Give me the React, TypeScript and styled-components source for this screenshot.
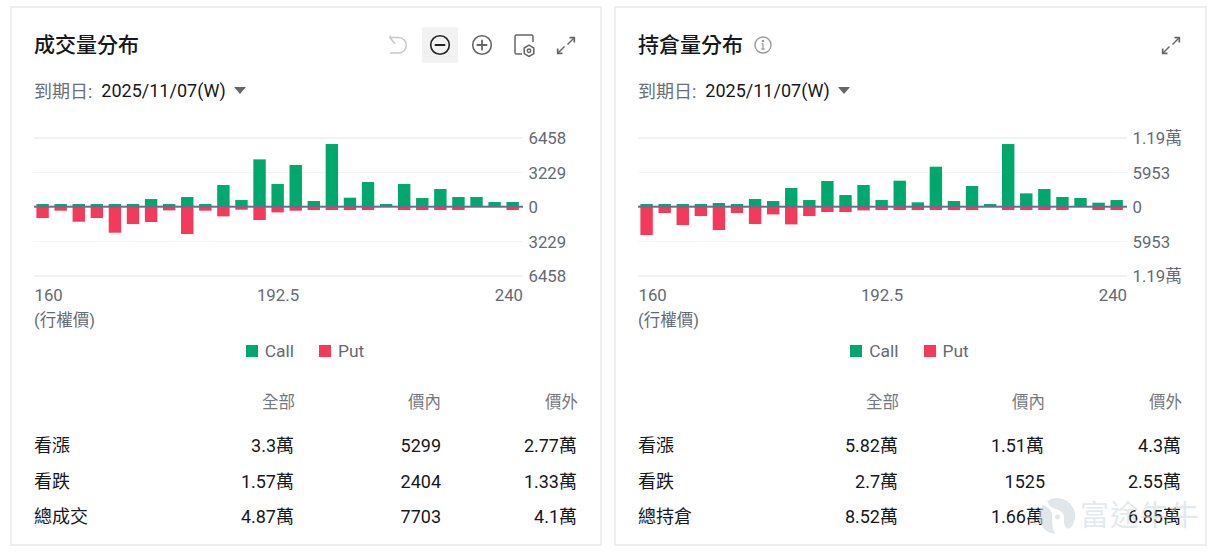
import React from "react";
import styled, { createGlobalStyle } from "styled-components";

const Global = createGlobalStyle`
  html, body { margin: 0; padding: 0; background: #fff; }
  body { font-family: Roboto, "Noto Sans CJK TC", sans-serif; }
`;

const Page = styled.div`
  position: relative;
  display: flex;
  gap: 12px;
  width: 1217px;
  height: 552px;
  padding: 6px 10px;
  box-sizing: border-box;
  overflow: hidden;
`;
const Panel = styled.section<{ $w: number }>`
  width: ${(p) => p.$w}px;
  height: 540px;
  box-sizing: border-box;
  border: 2px solid #eeeeee;
  padding: 0 22px;
  display: flex;
  flex-direction: column;
`;
const Header = styled.header`
  display: flex;
  align-items: center;
  height: 36px;
  margin-top: 19px;
  flex: none;
`;
const Title = styled.h2`
  margin: 0;
  font-size: 21px;
  line-height: 28px;
  font-weight: 500;
  color: #16181c;
`;
const InfoButton = styled.span`
  display: inline-flex;
  margin-left: 11px;
  color: #9a9a9a;
`;
const Tools = styled.div`
  margin-left: auto;
  margin-right: -6px;
  display: flex;
  align-items: center;
  gap: 6px;
`;
const Tool = styled.span<{ $active?: boolean; $color: string }>`
  display: flex;
  align-items: center;
  justify-content: center;
  width: 36px;
  height: 36px;
  border-radius: 2px;
  color: ${(p) => p.$color};
  background: ${(p) => (p.$active ? "#f2f2f2" : "transparent")};
`;
const DateRow = styled.div`
  display: flex;
  align-items: center;
  height: 30px;
  margin-top: 12px;
  font-size: 18px;
  flex: none;
`;
const DateLabel = styled.span`
  color: #6b6f76;
  margin-right: 9px;
`;
const DateValue = styled.span`
  color: #16181c;
`;
const Caret = styled.span`
  width: 0;
  height: 0;
  margin-left: 8px;
  border-left: 6px solid transparent;
  border-right: 6px solid transparent;
  border-top: 7px solid #666;
`;
const ChartSvg = styled.svg`
  display: block;
  flex: none;
  margin-top: 23px;
  text {
    font-family: Roboto, "Noto Sans CJK TC", sans-serif;
    font-size: 16.8px;
    fill: #646a75;
  }
`;
const AxisName = styled.div`
  font-size: 16.5px;
  line-height: 24px;
  height: 24px;
  margin-top: 3px;
  color: #646a75;
  flex: none;
`;
const Legend = styled.div`
  display: flex;
  justify-content: center;
  gap: 25px;
  margin-top: 3px;
  height: 30px;
  align-items: center;
  font-size: 17.4px;
  color: #646a75;
  padding-right: 2px;
  flex: none;
`;
const LegendItem = styled.span`
  display: flex;
  align-items: center;
  gap: 7px;
`;
const Swatch = styled.i<{ $c: string }>`
  width: 12px;
  height: 12px;
  background: ${(p) => p.$c};
`;
const Table = styled.div`
  display: grid;
  grid-template-columns: 100px 161px 146px 137px;
  grid-template-rows: 42px repeat(3, 35.7px);
  margin-top: 20px;
  align-items: center;
  font-size: 18px;
  line-height: 24px;
  color: #16181c;
`;
const HeadCell = styled.div`
  text-align: right;
  font-size: 16.5px;
  color: #75797f;
  line-height: 34px;
  align-self: start;
`;
const Cell = styled.div<{ $unit: boolean }>`
  text-align: right;
  padding-right: ${(p) => (p.$unit ? 1 : 0)}px;
`;
const LabelCell = styled.div`
  text-align: left;
`;
const Watermark = styled.div`
  position: absolute;
  left: 1039px;
  top: 497px;
  display: flex;
  align-items: center;
  gap: 5px;
  color: rgba(205, 214, 222, 0.55);
  font-size: 29px;
  line-height: 38px;
  letter-spacing: 1px;
  white-space: nowrap;
  pointer-events: none;
`;

const GREEN = "#00a86e";
const RED = "#f43a5a";

const vol = {
  callTop: [237,237,237,237,237,237,222,237,216,237,180,225,103,177,120,228,57,218,171,237,177,219,192,216,216,231,231],
  putBottom: [279,257,290,279,323,297,291,256,327,257,274,254,285,262,257,255,255,255,255,245,255,255,255,255,245,245,255],
  ticks: ["6458", "3229", "0", "3229", "6458"],
};
const oi = {
  callTop: [237,237,237,237,234,237,222,228,189,225,168,210,180,225,167,232,125,228,183,237,57,205,192,216,219,233,225],
  putBottom: [330,264,300,273,315,264,297,268,298,273,261,261,256,255,255,255,255,255,255,245,255,255,255,255,245,255,255],
  ticks: ["1.19萬", "5953", "0", "5953", "1.19萬"],
};

function Chart({ data }: { data: typeof vol }) {
  const base = 78.7;
  const ys = [10, 45, 78.7, 114, 147.7];
  const toY = (z: number) => (z - 245) / 3 + base;
  return (
    <ChartSvg width={544} height={178} viewBox="0 0 544 178">
      <rect x={0} y={9} width={489} height={2} fill="#f2f2f2" />
      <rect x={0} y={44} width={489} height={1} fill="#f4f4f4" />
      <rect x={0} y={113} width={489} height={1} fill="#f4f4f4" />
      <rect x={0} y={147} width={489} height={2} fill="#f2f2f2" />
      {data.callTop.map((t, i) => (
        <rect key={"c" + i} x={2.4 + i * 18.08} y={toY(t)} width={12.4} height={base - toY(t)} fill={GREEN} />
      ))}
      {data.putBottom.map((b, i) => (
        <rect key={"p" + i} x={2.4 + i * 18.08} y={base} width={12.4} height={toY(b) - base} fill={RED} />
      ))}
      <rect x={0} y={77.7} width={489} height={2} fill="#64708a" />
      {data.ticks.map((t, i) => (
        <text key={i} x={494.5} y={ys[i] + 6}>{t}</text>
      ))}
      <text x={0.5} y={173}>160</text>
      <text x={244} y={173} textAnchor="middle">192.5</text>
      <text x={489} y={173} textAnchor="end">240</text>
    </ChartSvg>
  );
}

const Undo = () => (
  <svg width="22" height="22" viewBox="0 0 22 22" fill="none" stroke="currentColor" strokeWidth="1.5" strokeLinejoin="round">
    <path d="M3 3.500h8.500a7.800 7.800 0 0 1 0 15.600H3" />
    <path d="M3 1.600v2.200l5 6" />
  </svg>
);
const Circle = ({ plus }: { plus?: boolean }) => (
  <svg width="22" height="22" viewBox="0 0 22 22" fill="none" stroke="currentColor" strokeWidth="1.6" strokeLinecap="round">
    <circle cx="11" cy="11" r="9.300" />
    <path d="M6.400 11h9.200" strokeWidth="1.800" />
    {plus && <path d="M11 6.400v9.200" strokeWidth="1.800" />}
  </svg>
);
const Settings = () => (
  <svg width="24" height="24" viewBox="0 0 24 24" fill="none" stroke="currentColor" strokeWidth="1.500" strokeLinejoin="round">
    <path d="M10 21H4.500A1.500 1.500 0 0 1 3 19.500V3.500A1.500 1.500 0 0 1 4.500 2H19.500A1.500 1.500 0 0 1 21 3.500V9" />
    <path d="M17 12.200l4.800 2.800v5.700L17 23.500l-4.800-2.800V15z" />
    <circle cx="17" cy="17.800" r="1.700" />
  </svg>
);
const Expand = () => (
  <svg width="20" height="20" viewBox="0 0 20 20" fill="none" stroke="currentColor" strokeWidth="1.500">
    <path d="M13.500 2.700h4.800v4.800" strokeWidth="1.700" />
    <path d="M18 3l-6.500 6.500" />
    <path d="M6.500 18.300H1.700v-4.800" strokeWidth="1.700" />
    <path d="M2 18l6.500-6.500" />
  </svg>
);
const Info = () => (
  <svg width="18" height="18" viewBox="0 0 18 18" fill="none" stroke="currentColor" strokeWidth="1.400">
    <circle cx="9" cy="9" r="8" />
    <path d="M9 7.600v5M7.400 13h3.200M7.800 7.700H9" strokeWidth="1.300" />
    <circle cx="9" cy="5" r="0.600" fill="currentColor" />
  </svg>
);
const Logo = () => (
  <svg width="36" height="36" viewBox="0 0 36 36" fill="rgba(205,214,222,0.6)">
    <path d="M18 0a18 18 0 0 1 14 29.400C28 33 24 27 25 21c1-7-5-9-11-11C10 8.500 9 4 8 3a18 18 0 0 1 10-3z" />
    <path d="M4 7c5 2 8 5 9 9 1 6-1 12 3 20A18 18 0 0 1 4 7z" />
    <circle cx="18.500" cy="19" r="2.500" />
  </svg>
);

type Row = [string, string, string, string];
const volRows: Row[] = [
  ["看漲", "3.3萬", "5299", "2.77萬"],
  ["看跌", "1.57萬", "2404", "1.33萬"],
  ["總成交", "4.87萬", "7703", "4.1萬"],
];
const oiRows: Row[] = [
  ["看漲", "5.82萬", "1.51萬", "4.3萬"],
  ["看跌", "2.7萬", "1525", "2.55萬"],
  ["總持倉", "8.52萬", "1.66萬", "6.85萬"],
];

function Body({ data, rows }: { data: typeof vol; rows: Row[] }) {
  return (
    <>
      <DateRow>
        <DateLabel>到期日:</DateLabel>
        <DateValue>2025/11/07(W)</DateValue>
        <Caret />
      </DateRow>
      <Chart data={data} />
      <AxisName>(行權價)</AxisName>
      <Legend>
        <LegendItem><Swatch $c={GREEN} />Call</LegendItem>
        <LegendItem><Swatch $c={RED} />Put</LegendItem>
      </Legend>
      <Table>
        <span />
        <HeadCell>全部</HeadCell>
        <HeadCell>價內</HeadCell>
        <HeadCell>價外</HeadCell>
        {rows.map((r) => (
          <React.Fragment key={r[0]}>
            <LabelCell>{r[0]}</LabelCell>
            {r.slice(1).map((v, i) => (
              <Cell key={i} $unit={v.endsWith("萬")}>{v}</Cell>
            ))}
          </React.Fragment>
        ))}
      </Table>
    </>
  );
}

export default function App() {
  return (
    <Page>
      <Global />
      <Panel $w={592}>
        <Header>
          <Title>成交量分布</Title>
          <Tools>
            <Tool $color="#c8c8c8"><Undo /></Tool>
            <Tool $color="#222" $active><Circle /></Tool>
            <Tool $color="#666"><Circle plus /></Tool>
            <Tool $color="#666"><Settings /></Tool>
            <Tool $color="#666"><Expand /></Tool>
          </Tools>
        </Header>
        <Body data={vol} rows={volRows} />
      </Panel>
      <Panel $w={593}>
        <Header>
          <Title>持倉量分布</Title>
          <InfoButton><Info /></InfoButton>
          <Tools>
            <Tool $color="#666"><Expand /></Tool>
          </Tools>
        </Header>
        <Body data={oi} rows={oiRows} />
      </Panel>
      <Watermark>
        <Logo />
        富途牛牛
      </Watermark>
    </Page>
  );
}
